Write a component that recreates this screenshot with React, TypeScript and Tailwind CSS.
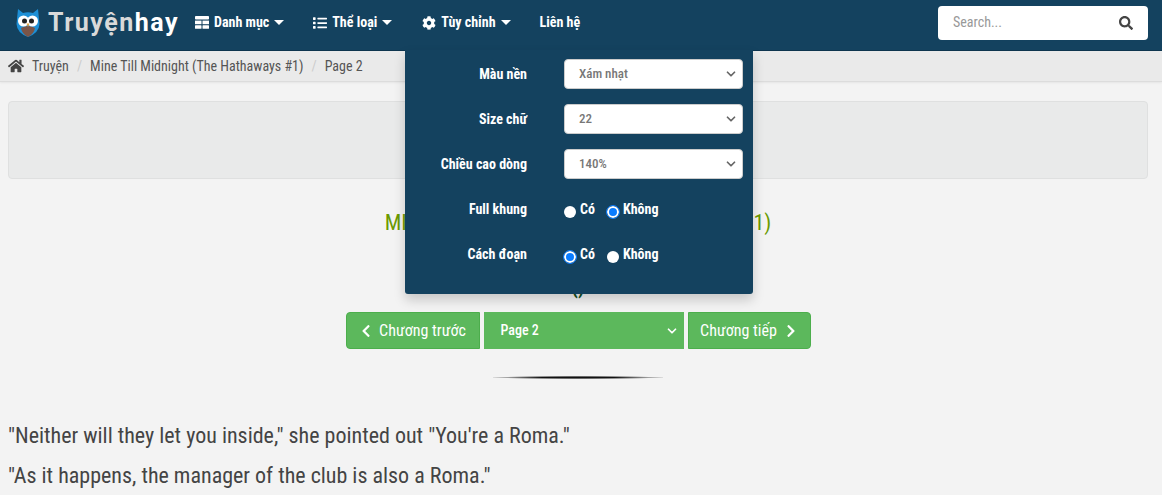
import { ChevronDown } from "lucide-react";
import { FaCog, FaHome, FaList, FaSearch, FaChevronLeft, FaChevronRight } from "react-icons/fa";

function Owl() {
  return (
    <svg width="24" height="30" viewBox="0 0 24 30" className="shrink-0">
      <path d="M2 1 L7 5 Q12 3.5 17 5 L22 1 L23.5 16 Q23 25 12 29 Q1 25 0.5 16 Z" fill="#1d8fd6" />
      <path d="M5 20 Q12 16 19 20 Q18 26 12 29 Q6 26 5 20Z" fill="#7a5548" />
      <circle cx="7.5" cy="13" r="5.5" fill="#fff" />
      <circle cx="16.5" cy="13" r="5.5" fill="#fff" />
      <circle cx="8.5" cy="13" r="2.5" fill="#222" />
      <circle cx="15.5" cy="13" r="2.5" fill="#222" />
      <path d="M10.5 15.5 L13.5 15.5 L12 19 Z" fill="#e9a23b" />
    </svg>
  );
}

function TableIcon() {
  return (
    <svg width="14" height="13" viewBox="0 0 14 13" className="mr-[5px]" fill="#fff">
      <rect x="0" y="0" width="14" height="3.6" rx="0.8" />
      <rect x="0" y="4.6" width="6.5" height="3.6" />
      <rect x="7.5" y="4.6" width="6.5" height="3.6" />
      <rect x="0" y="9.2" width="6.5" height="3.6" rx="0.5" />
      <rect x="7.5" y="9.2" width="6.5" height="3.6" rx="0.5" />
    </svg>
  );
}

function Caret() {
  return <span className="ml-[5px] inline-block w-0 h-0 border-x-[5px] border-x-transparent border-t-[5px] border-t-white" />;
}

function NavItem({ icon, label, caret = true, className = "" }: { icon?: React.ReactNode; label: string; caret?: boolean; className?: string }) {
  return (
    <div className={`flex items-center text-white text-[14px] font-bold ${className}`}>
      {icon}
      <span>{label}</span>
      {caret && <Caret />}
    </div>
  );
}

function FakeSelect({ value }: { value: string }) {
  return (
    <div className="w-[179px] h-[30px] bg-white rounded-[4px] border border-[#ccc] flex items-center justify-between pl-[14px] pr-[4px] text-[13px] font-medium text-[#777]">
      <span>{value}</span>
      <ChevronDown size={14} strokeWidth={3} className="text-[#666]" />
    </div>
  );
}

function Radio({ on, label, className = "" }: { on: boolean; label: string; className?: string }) {
  return (
    <div className={`flex items-start ${className}`}>
      <span className={`mt-[5px] w-[12px] h-[12px] rounded-full ${on ? "border-[2px] border-white bg-[#0a7cff] outline outline-[1px] outline-[#0a7cff]" : "bg-white"}`} />
      <span className="ml-[4px] text-white font-bold text-[14px] leading-[16px]">{label}</span>
    </div>
  );
}

function Row({ label, children }: { label: string; children: React.ReactNode }) {
  return (
    <div className="flex items-center h-[30px]">
      <div className="w-[122px] text-right text-white font-bold text-[14px] mr-[37px]">{label}</div>
      {children}
    </div>
  );
}

export default function App() {
  return (
    <div className="relative w-[1162px] h-[495px] overflow-hidden bg-[#f3f3f3] font-['Roboto',sans-serif] [font-stretch:75%]">
      <nav className="h-[51px] bg-[#14425f] border-b border-[#0f3650] flex items-center pl-[16px] pr-[14px] pb-[5px]">
        <Owl />
        <div className="ml-[8px] text-[25px] font-bold tracking-[1.5px] leading-none w-[130px] text-[#d9d9d9] whitespace-nowrap [font-stretch:100%]">
          Truyện<span className="text-white">hay</span>
        </div>
        <div className="flex items-center ml-[17px]">
          <NavItem icon={<TableIcon />} label="Danh mục" />
          <NavItem icon={<FaList size={14} className="mr-[5px]" />} label="Thể loại" className="ml-[29px]" />
          <NavItem icon={<FaCog size={14} className="mr-[5px]" />} label="Tùy chỉnh" className="ml-[30px]" />
          <NavItem label="Liên hệ" caret={false} className="ml-[29px]" />
        </div>
        <div className="ml-auto w-[210px] h-[34px] bg-white rounded-[4px] flex items-center justify-between pl-[15px] pr-[15px]">
          <span className="text-[14px] text-[#999]">Search...</span>
          <FaSearch size={14} className="text-[#444]" />
        </div>
      </nav>

      <div className="h-[31px] bg-[#eaeaea] border-b border-[#dcdcdc] shadow-[0_1px_2px_rgba(0,0,0,0.06)] flex items-center pl-[8px] text-[14px] text-[#555]">
        <FaHome size={16} className="text-[#444] mr-[8px]" />
        <span>Truyện</span>
        <span className="mx-[8px] text-[#ccc]">/</span>
        <span>Mine Till Midnight (The Hathaways #1)</span>
        <span className="mx-[8px] text-[#ccc]">/</span>
        <span>Page 2</span>
      </div>

      <main className="ml-[8px] w-[1140px]">
        <div className="mt-[19px] h-[78px] bg-[#e9eaea] border border-[#dfe0e0] rounded-[4px]" />

        <h1 className="mt-[29px] text-center text-[22px] leading-[30px] font-normal text-[#6a9a00] uppercase">
          Mine Till Midnight (The Hathaways #1)
        </h1>

        <div className="mt-[40px] h-[19px] text-center text-[#14501f] text-[20px] font-bold leading-[19px]">()</div>

        <div className="mt-[15px] flex justify-center text-white text-[16px]">
          <div className="w-[134px] h-[37px] bg-[#5cb85c] border border-[#4cae4c] rounded-l-[4px] flex items-center justify-center">
            <FaChevronLeft size={14} className="mr-[6px]" />
            Chương trước
          </div>
          <div className="ml-[4px] w-[200px] h-[37px] bg-[#5cb85c] flex items-center justify-between pl-[17px] pr-[5px] text-[14px] font-medium">
            Page 2
            <ChevronDown size={14} strokeWidth={3} />
          </div>
          <div className="ml-[4px] w-[123px] h-[37px] bg-[#5cb85c] border border-[#4cae4c] rounded-r-[4px] flex items-center justify-center">
            Chương tiếp
            <FaChevronRight size={14} className="ml-[7px]" />
          </div>
        </div>

        <div className="mt-[27px] mx-auto w-[170px] h-[3px] bg-[radial-gradient(ellipse_at_center,#111_0%,#111_30%,rgba(0,0,0,0)_75%)]" />

        <div className="mt-[37px] text-[22px] leading-[40px] text-[#444]">
          <p>"Neither will they let you inside," she pointed out "You're a Roma."</p>
          <p>"As it happens, the manager of the club is also a Roma."</p>
        </div>
      </main>

      <div className="absolute left-[405px] top-[50px] w-[348px] h-[244px] bg-[#14425f] rounded-b-[3px] shadow-[0_6px_12px_rgba(0,0,0,0.18)] pt-[9px] flex flex-col gap-[15px]">
        <Row label="Màu nền"><FakeSelect value="Xám nhạt" /></Row>
        <Row label="Size chữ"><FakeSelect value="22" /></Row>
        <Row label="Chiều cao dòng"><FakeSelect value="140%" /></Row>
        <Row label="Full khung">
          <Radio on={false} label="Có" />
          <Radio on label="Không" className="ml-[12px]" />
        </Row>
        <Row label="Cách đoạn">
          <Radio on label="Có" />
          <Radio on={false} label="Không" className="ml-[12px]" />
        </Row>
      </div>
    </div>
  );
}
